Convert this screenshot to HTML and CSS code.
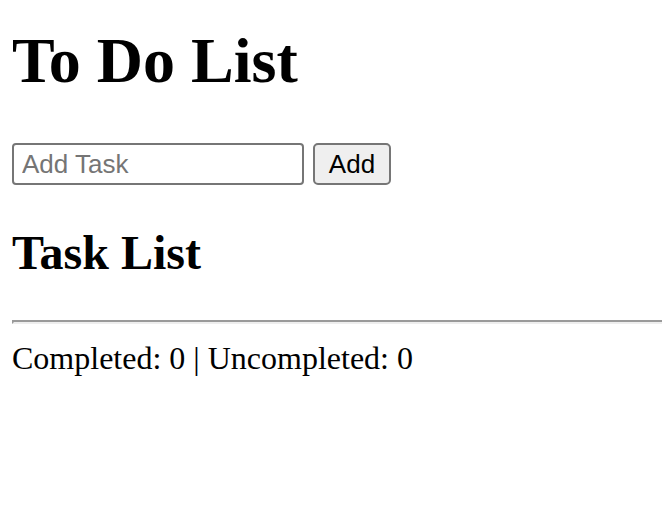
FILE: index.html
```html
<!DOCTYPE html>
<html lang="en">
<head>
<meta charset="utf-8">
<title>To Do List</title>
<link rel="stylesheet" href="styles.css">
</head>
<body>
<h1 class="title">To Do List</h1>
<div class="add-row">
  <input class="task-input" type="text" placeholder="Add Task">
  <button class="add-btn" type="button">Add</button>
</div>
<h2 class="subtitle">Task List</h2>
<ul class="task-list"></ul>
<hr class="divider">
<p class="stats">Completed: 0 | Uncompleted: 0</p>
</body>
</html>
```
FILE: styles.css
```css
html, body {
  margin: 0;
  padding: 0;
  background: #fff;
}
body {
  padding-left: 12px;
  font-family: "Liberation Serif", "Times New Roman", serif;
  color: #000;
}
.title {
  margin: 25px 0 0;
  font-size: 64px;
  line-height: 72px;
  font-weight: bold;
}
.add-row {
  display: flex;
  align-items: center;
  gap: 9px;
  margin-top: 46px;
}
.task-input {
  box-sizing: border-box;
  width: 292px;
  height: 42px;
  margin: 0;
  padding: 0 8px;
  border: 2px solid #767676;
  border-radius: 4px;
  font-family: "Liberation Sans", Arial, sans-serif;
  font-size: 26px;
  color: #000;
  background: #fff;
}
.task-input::placeholder {
  color: #757575;
}
.add-btn {
  box-sizing: border-box;
  width: 78px;
  height: 42px;
  margin: 0;
  padding: 0;
  border: 2px solid #767676;
  border-radius: 5px;
  background: #efefef;
  font-family: "Liberation Sans", Arial, sans-serif;
  font-size: 26px;
  color: #000;
}
.subtitle {
  margin: 40px 0 0;
  font-size: 48px;
  line-height: 56px;
  font-weight: bold;
}
.task-list {
  margin: 0;
  padding: 0;
  list-style: none;
}
.divider {
  margin: 39px 0 0;
  height: 0;
  border: 0;
  border-top: 2px solid #9a9a9a;
  border-bottom: 2px solid #eeeeee;
  border-left: 2px solid #9a9a9a;
}
.stats {
  margin: 16px 0 0;
  font-size: 32px;
  line-height: 37px;
}
```
